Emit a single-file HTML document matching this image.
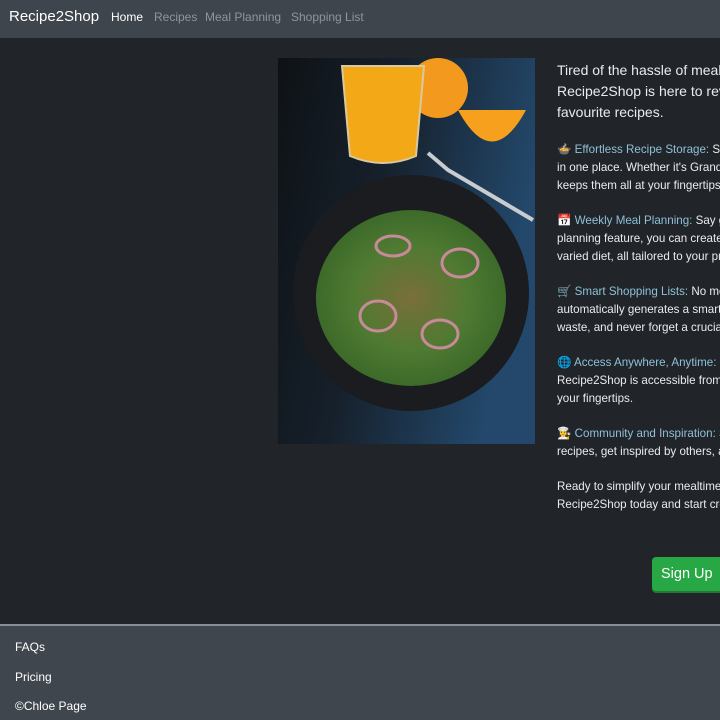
<!DOCTYPE html>
<html><head><meta charset="utf-8"><style>
*{margin:0;padding:0;box-sizing:border-box}
html,body{width:720px;height:720px;overflow:hidden}
body{background:#212529;font-family:"Liberation Sans","Noto Sans CJK JP",sans-serif;color:#dee2e6;position:relative}
.nav{position:absolute;left:0;top:0;width:720px;height:38px;background:#3f454c}
.brand{position:absolute;left:9px;top:8px;font-size:15px;color:#fff}
.nl{position:absolute;top:10px;font-size:12px;color:#8e959c}
.img{position:absolute;left:278px;top:58px;width:257px;height:386px}
.txt{position:absolute;left:557px;top:60px;width:163px;overflow:hidden;white-space:nowrap;font-size:11.6px;line-height:18px;color:#e9ecef}
.h{font-size:14px;line-height:21px;margin-bottom:18px}
.p{margin-bottom:17px}
.k{color:#8fc0d8}
.btnw{position:absolute;left:652px;top:557px;width:68px;height:38px;overflow:hidden}
.btn{width:80px;height:34px;background:#28a745;border-radius:4px;color:#fff;font-size:14.5px;padding:9px 0 0 9px;box-shadow:0 2px 0 #1c7a31}
.foot{position:absolute;left:0;top:624px;width:720px;height:96px;background:#40464d;border-top:2px solid #8a8f94}
.f{position:absolute;left:15px;font-size:12px;color:#fff}
</style></head><body>
<div class="nav">
<div class="brand">Recipe2Shop</div>
<div class="nl" style="left:111px;color:#fff">Home</div>
<div class="nl" style="left:154px">Recipes</div>
<div class="nl" style="left:205px">Meal Planning</div>
<div class="nl" style="left:291px">Shopping List</div>
</div>
<svg class="img" viewBox="0 0 257 386">
<defs><linearGradient id="bg" x1="0" y1="0" x2="1" y2="0.3"><stop offset="0" stop-color="#0e1216"/><stop offset="0.45" stop-color="#16202b"/><stop offset="1" stop-color="#23486b"/></linearGradient>
<radialGradient id="sal" cx="0.5" cy="0.5" r="0.5"><stop offset="0" stop-color="#7a6f3a"/><stop offset="0.6" stop-color="#4f7a32"/><stop offset="1" stop-color="#3d6a2a"/></radialGradient></defs>
<rect width="257" height="386" fill="url(#bg)"/>
<circle cx="133" cy="235" r="118" fill="#1a1c1f"/>
<ellipse cx="133" cy="240" rx="95" ry="88" fill="url(#sal)"/>
<ellipse cx="100" cy="258" rx="18" ry="15" fill="none" stroke="#c88a9a" stroke-width="3"/>
<ellipse cx="162" cy="276" rx="18" ry="14" fill="none" stroke="#c88a9a" stroke-width="3"/>
<ellipse cx="182" cy="205" rx="18" ry="14" fill="none" stroke="#c88a9a" stroke-width="3"/>
<ellipse cx="115" cy="188" rx="17" ry="10" fill="none" stroke="#c88a9a" stroke-width="3"/>
<circle cx="160" cy="30" r="30" fill="#f39a1e"/>
<path d="M180 52 Q214 115 248 52Z" fill="#f7a01e"/>
<path d="M64 8 L146 8 L138 98 Q105 112 72 98 Z" fill="#f2a817" stroke="#d9c9a0" stroke-width="2"/>
<path d="M150 95 L170 112 L255 162" stroke="#c8ccd0" stroke-width="4" fill="none"/>
</svg>
<div class="txt">
<div class="h">Tired of the hassle of meal planning and grocery shopping?<br>Recipe2Shop is here to revolutionize the way you manage your<br>favourite recipes.</div>
<div class="p">🍲 <span class="k">Effortless Recipe Storage:</span> Simply save all your recipes<br>in one place. Whether it's Grandma's classic or a new find, Recipe2Shop<br>keeps them all at your fingertips.</div>
<div class="p">📅 <span class="k">Weekly Meal Planning:</span> Say goodbye to stress. With our<br>planning feature, you can create weekly menus that ensure a<br>varied diet, all tailored to your preferences.</div>
<div class="p">🛒 <span class="k">Smart Shopping Lists:</span> No more forgotten items. Recipe2Shop<br>automatically generates a smart shopping list so you save time, reduce<br>waste, and never forget a crucial ingredient.</div>
<div class="p">🌐 <span class="k">Access Anywhere, Anytime:</span> On your phone or laptop,<br>Recipe2Shop is accessible from any device, keeping your recipes at<br>your fingertips.</div>
<div class="p">👩‍🍳 <span class="k">Community and Inspiration:</span> Share your favourite<br>recipes, get inspired by others, and discover new dishes.</div>
<div class="p">Ready to simplify your mealtimes? Sign up for<br>Recipe2Shop today and start creating!</div>
</div>
<div class="btnw"><div class="btn">Sign Up</div></div>
<div class="foot">
<div class="f" style="top:14px">FAQs</div>
<div class="f" style="top:44px">Pricing</div>
<div class="f" style="top:73px">©Chloe Page</div>
</div>
</body></html>
